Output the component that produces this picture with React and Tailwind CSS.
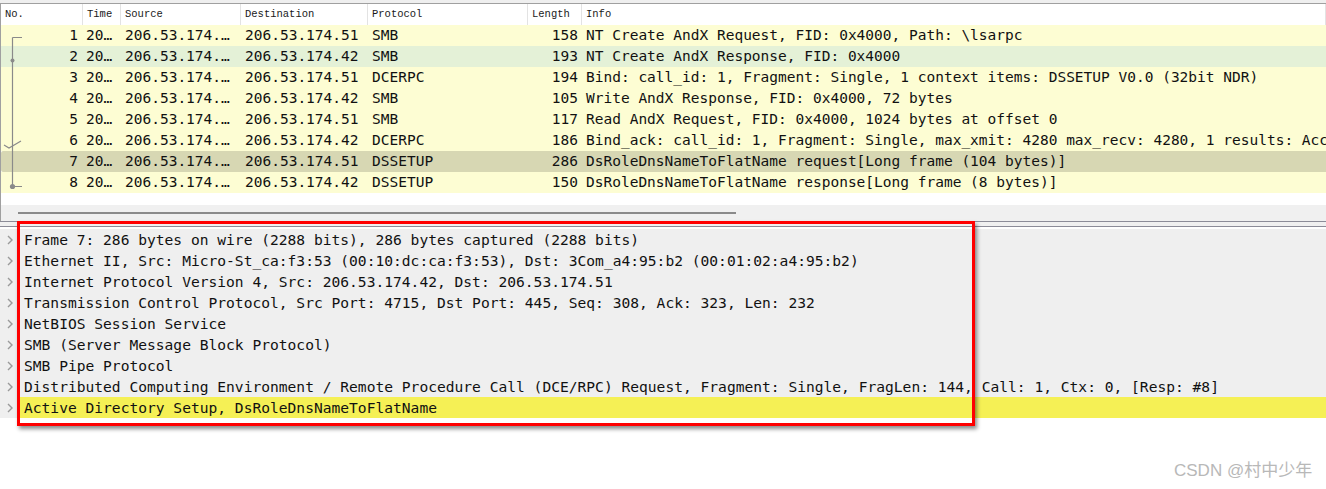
const MONO = { fontFamily: '"DejaVu Sans Mono", "Liberation Mono", monospace' }

const PACKETS = [
  { no: 1, src: '206.53.174.…', dst: '206.53.174.51', proto: 'SMB', len: 158, info: 'NT Create AndX Request, FID: 0x4000, Path: \\lsarpc', bg: 'bg-[#fdfdd3]' },
  { no: 2, src: '206.53.174.…', dst: '206.53.174.42', proto: 'SMB', len: 193, info: 'NT Create AndX Response, FID: 0x4000', bg: 'bg-[#e4f1d7]' },
  { no: 3, src: '206.53.174.…', dst: '206.53.174.51', proto: 'DCERPC', len: 194, info: 'Bind: call_id: 1, Fragment: Single, 1 context items: DSSETUP V0.0 (32bit NDR)', bg: 'bg-[#fdfdd3]' },
  { no: 4, src: '206.53.174.…', dst: '206.53.174.42', proto: 'SMB', len: 105, info: 'Write AndX Response, FID: 0x4000, 72 bytes', bg: 'bg-[#fdfdd3]' },
  { no: 5, src: '206.53.174.…', dst: '206.53.174.51', proto: 'SMB', len: 117, info: 'Read AndX Request, FID: 0x4000, 1024 bytes at offset 0', bg: 'bg-[#fdfdd3]' },
  { no: 6, src: '206.53.174.…', dst: '206.53.174.42', proto: 'DCERPC', len: 186, info: 'Bind_ack: call_id: 1, Fragment: Single, max_xmit: 4280 max_recv: 4280, 1 results: Acc', bg: 'bg-[#fdfdd3]' },
  { no: 7, src: '206.53.174.…', dst: '206.53.174.51', proto: 'DSSETUP', len: 286, info: 'DsRoleDnsNameToFlatName request[Long frame (104 bytes)]', bg: 'bg-[#d7d7b3]' },
  { no: 8, src: '206.53.174.…', dst: '206.53.174.42', proto: 'DSSETUP', len: 150, info: 'DsRoleDnsNameToFlatName response[Long frame (8 bytes)]', bg: 'bg-[#fdfdd3]' },
]

const DETAILS = [
  'Frame 7: 286 bytes on wire (2288 bits), 286 bytes captured (2288 bits)',
  'Ethernet II, Src: Micro-St_ca:f3:53 (00:10:dc:ca:f3:53), Dst: 3Com_a4:95:b2 (00:01:02:a4:95:b2)',
  'Internet Protocol Version 4, Src: 206.53.174.42, Dst: 206.53.174.51',
  'Transmission Control Protocol, Src Port: 4715, Dst Port: 445, Seq: 308, Ack: 323, Len: 232',
  'NetBIOS Session Service',
  'SMB (Server Message Block Protocol)',
  'SMB Pipe Protocol',
  'Distributed Computing Environment / Remote Procedure Call (DCE/RPC) Request, Fragment: Single, FragLen: 144, Call: 1, Ctx: 0, [Resp: #8]',
  'Active Directory Setup, DsRoleDnsNameToFlatName',
]

const HEADERS = [
  { label: 'No.', w: 'w-[82px]' },
  { label: 'Time', w: 'w-[38px]' },
  { label: 'Source', w: 'w-[120px]' },
  { label: 'Destination', w: 'w-[127px]' },
  { label: 'Protocol', w: 'w-[160px]' },
  { label: 'Length', w: 'w-[54px]' },
  { label: 'Info', w: 'flex-1' },
]

function TreeLines() {
  return (
    <svg className="absolute left-0 top-[25px]" width="26" height="168" fill="none" stroke="#8a8a8a" strokeWidth="1.2">
      <path d="M11.5 8.5 H21 M11.5 8.5 V157.5 M11.5 157.5 H21" />
      <circle cx="11.5" cy="31.5" r="2" fill="#8a8a8a" stroke="none" />
      <path d="M3 116 L8 119 L20 112" />
      <circle cx="11.5" cy="157.5" r="2.6" fill="#8a8a8a" stroke="none" />
    </svg>
  )
}

function Chevron() {
  return (
    <svg width="6" height="10" className="shrink-0" fill="none" stroke="#9a9a9a" strokeWidth="1.4">
      <path d="M1 1 L5 5 L1 9" />
    </svg>
  )
}

export default function App() {
  return (
    <div className="relative w-[1326px] h-[489px] overflow-hidden bg-white text-[#111]">
      <div className="h-[4px] bg-[#efefef] border-b border-[#a0a0a0]" />

      {/* packet list */}
      <div className="relative border-l border-[#a0a0a0]">
        <div className="flex h-[21px] items-center bg-white text-[10.5px] text-[#1a1a1a]" style={{ fontFamily: '"Liberation Mono", monospace' }}>
          {HEADERS.map((h) => (
            <div key={h.label} className={`${h.w} shrink-0 h-full flex items-center pl-[4px] border-r border-[#e3e3e3]`}>
              {h.label}
            </div>
          ))}
        </div>
        <div className="text-[14.5px] leading-[21px] whitespace-nowrap" style={MONO}>
          {PACKETS.map((p) => (
            <div key={p.no} className={`flex h-[21px] ${p.bg} ${p.no === 7 ? 'rounded-l-[2px]' : ''}`}>
              <span className="w-[81px] shrink-0 text-right pr-[4px]">{p.no}</span>
              <span className="w-[39px] shrink-0 pl-[4px]">20…</span>
              <span className="w-[120px] shrink-0 pl-[4px]">{p.src}</span>
              <span className="w-[127px] shrink-0 pl-[4px]">{p.dst}</span>
              <span className="w-[160px] shrink-0 pl-[4px]">{p.proto}</span>
              <span className="w-[50px] shrink-0 text-right">{p.len}</span>
              <span className="pl-[8px]">{p.info}</span>
            </div>
          ))}
        </div>
        <TreeLines />
        <div className="h-[12px] bg-white" />
        <div className="h-[16px] bg-[#f0f0f0] flex items-center">
          <div className="ml-[17px] w-[718px] h-[2px] bg-[#8a8a8a]" />
        </div>
      </div>

      {/* splitter */}
      <div className="h-[6px] bg-[#f0f0f0] border-t border-b border-[#8c8c98]" />

      {/* detail tree */}
      <div className="pt-[2px] text-[14.6px] leading-[21px] whitespace-nowrap" style={MONO}>
        {DETAILS.map((d, i) => {
          const last = i === DETAILS.length - 1
          return (
            <div key={d} className="flex h-[21px] items-center bg-[#efefef]">
              <div className="w-[20px] shrink-0 pl-[7px] flex items-center">
                <Chevron />
              </div>
              <div className={`flex-1 h-full pl-[4px] ${last ? 'bg-[#f5f055]' : ''}`}>{d}</div>
            </div>
          )
        })}
      </div>

      {/* annotation box */}
      <div className="absolute left-[17px] top-[221px] w-[958px] h-[205px] border-[3px] border-[#ff0000] shadow-[2px_3px_4px_rgba(0,0,0,0.45)]" />

      <div
        className="absolute left-[1174px] top-[458px] text-[17px] text-[#b8b8b8]"
        style={{ fontFamily: '"Liberation Sans", "Noto Sans CJK SC", sans-serif' }}
      >
        CSDN @村中少年
      </div>
    </div>
  )
}
